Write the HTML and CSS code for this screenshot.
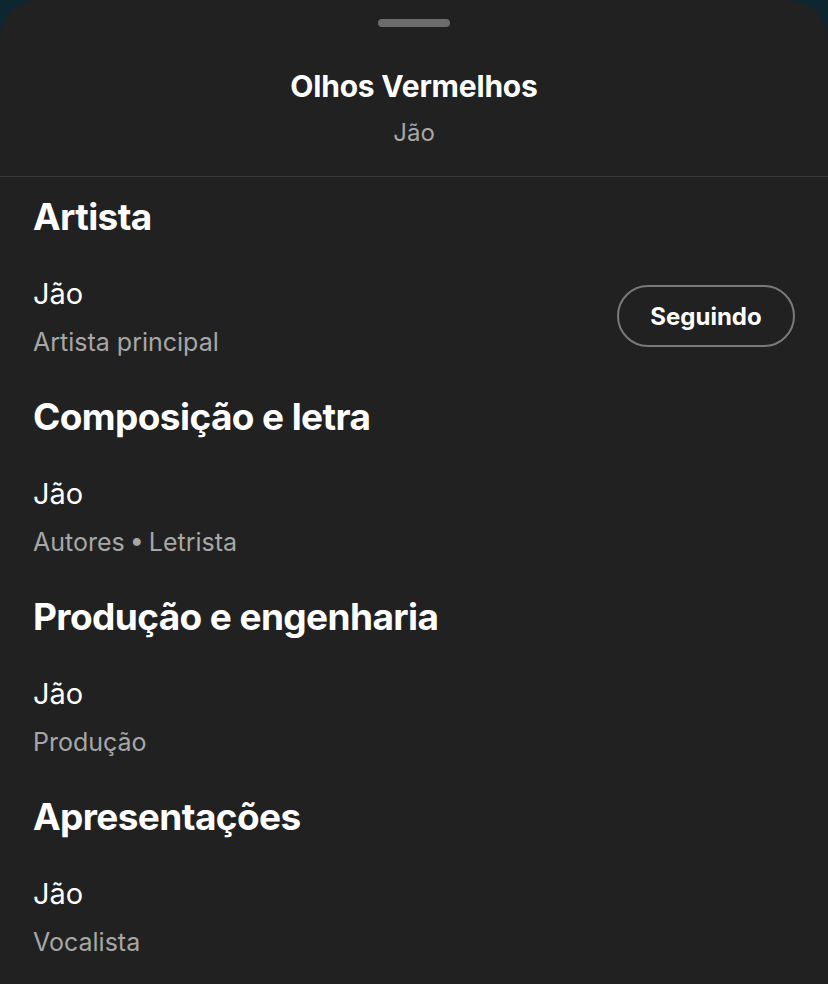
FILE: index.html
```html
<!DOCTYPE html>
<html lang="pt-BR">
<head>
<meta charset="UTF-8">
<meta name="viewport" content="width=device-width, initial-scale=1.0">
<title>Olhos Vermelhos - Créditos</title>
<link rel="stylesheet" href="styles.css">
</head>
<body>

<div class="sheet">
    <!-- Drag handle + track header -->
    <div class="sheet-header">
        <div class="handle"></div>
        <div class="track-title">Olhos Vermelhos</div>
        <div class="track-artist">Jão</div>
    </div>

    <div class="credits">
        <section class="credit-group">
            <h2>Artista</h2>
            <div class="credit-row">
                <div class="credit-info">
                    <div class="credit-name">Jão</div>
                    <div class="credit-role">Artista principal</div>
                </div>
                <button class="follow-btn">Seguindo</button>
            </div>
        </section>

        <section class="credit-group">
            <h2>Composição e letra</h2>
            <div class="credit-row">
                <div class="credit-info">
                    <div class="credit-name">Jão</div>
                    <div class="credit-role tight">Autores • Letrista</div>
                </div>
            </div>
        </section>

        <section class="credit-group">
            <h2>Produção e engenharia</h2>
            <div class="credit-row">
                <div class="credit-info">
                    <div class="credit-name">Jão</div>
                    <div class="credit-role">Produção</div>
                </div>
            </div>
        </section>

        <section class="credit-group">
            <h2>Apresentações</h2>
            <div class="credit-row">
                <div class="credit-info">
                    <div class="credit-name">Jão</div>
                    <div class="credit-role">Vocalista</div>
                </div>
            </div>
        </section>
    </div>
</div>

</body>
</html>
```

FILE: styles.css
```css
body {
    margin: 0;
    height: 984px;
    overflow: hidden;
    background-color: #0e2630;
    font-family: "Inter", "Liberation Sans", sans-serif;
    color: #ffffff;
}

.sheet {
    height: 984px;
    background-color: #212121;
    border-radius: 40px 40px 0 0;
}

.sheet-header {
    display: flex;
    flex-direction: column;
    align-items: center;
    padding-top: 19px;
    border-bottom: 1px solid #3a3a3a;
    height: 157px;
    box-sizing: content-box;
}

.handle {
    width: 72px;
    height: 8px;
    border-radius: 4px;
    background-color: #6c6c6c;
}

.track-title {
    margin-top: 40px;
    font-size: 30px;
    line-height: 38px;
    font-weight: 700;
    letter-spacing: -0.2px;
}

.track-artist {
    margin-top: 14px;
    font-size: 24px;
    line-height: 28px;
    color: #a7a7a7;
}

.credits {
    padding: 16px 33px 0 33px;
}

.credit-group {
    margin-bottom: 35px;
}

.credit-group h2 {
    margin: 0;
    font-size: 37px;
    line-height: 48px;
    font-weight: 700;
    letter-spacing: -0.6px;
}

.credit-row {
    display: flex;
    align-items: center;
    justify-content: space-between;
    margin-top: 33px;
}

.credit-name {
    font-size: 29px;
    line-height: 40px;
}

.credit-role {
    margin-top: 12px;
    font-size: 25px;
    line-height: 32px;
    color: #a7a7a7;
}

/* tighter spaces around the bullet */
.credit-role.tight {
    word-spacing: -2px;
}

.follow-btn {
    width: 178px;
    height: 62px;
    border: 2px solid #7a7a7a;
    border-radius: 31px;
    background: transparent;
    color: #ffffff;
    font-family: inherit;
    font-size: 24px;
    font-weight: 700;
    cursor: pointer;
}
```
